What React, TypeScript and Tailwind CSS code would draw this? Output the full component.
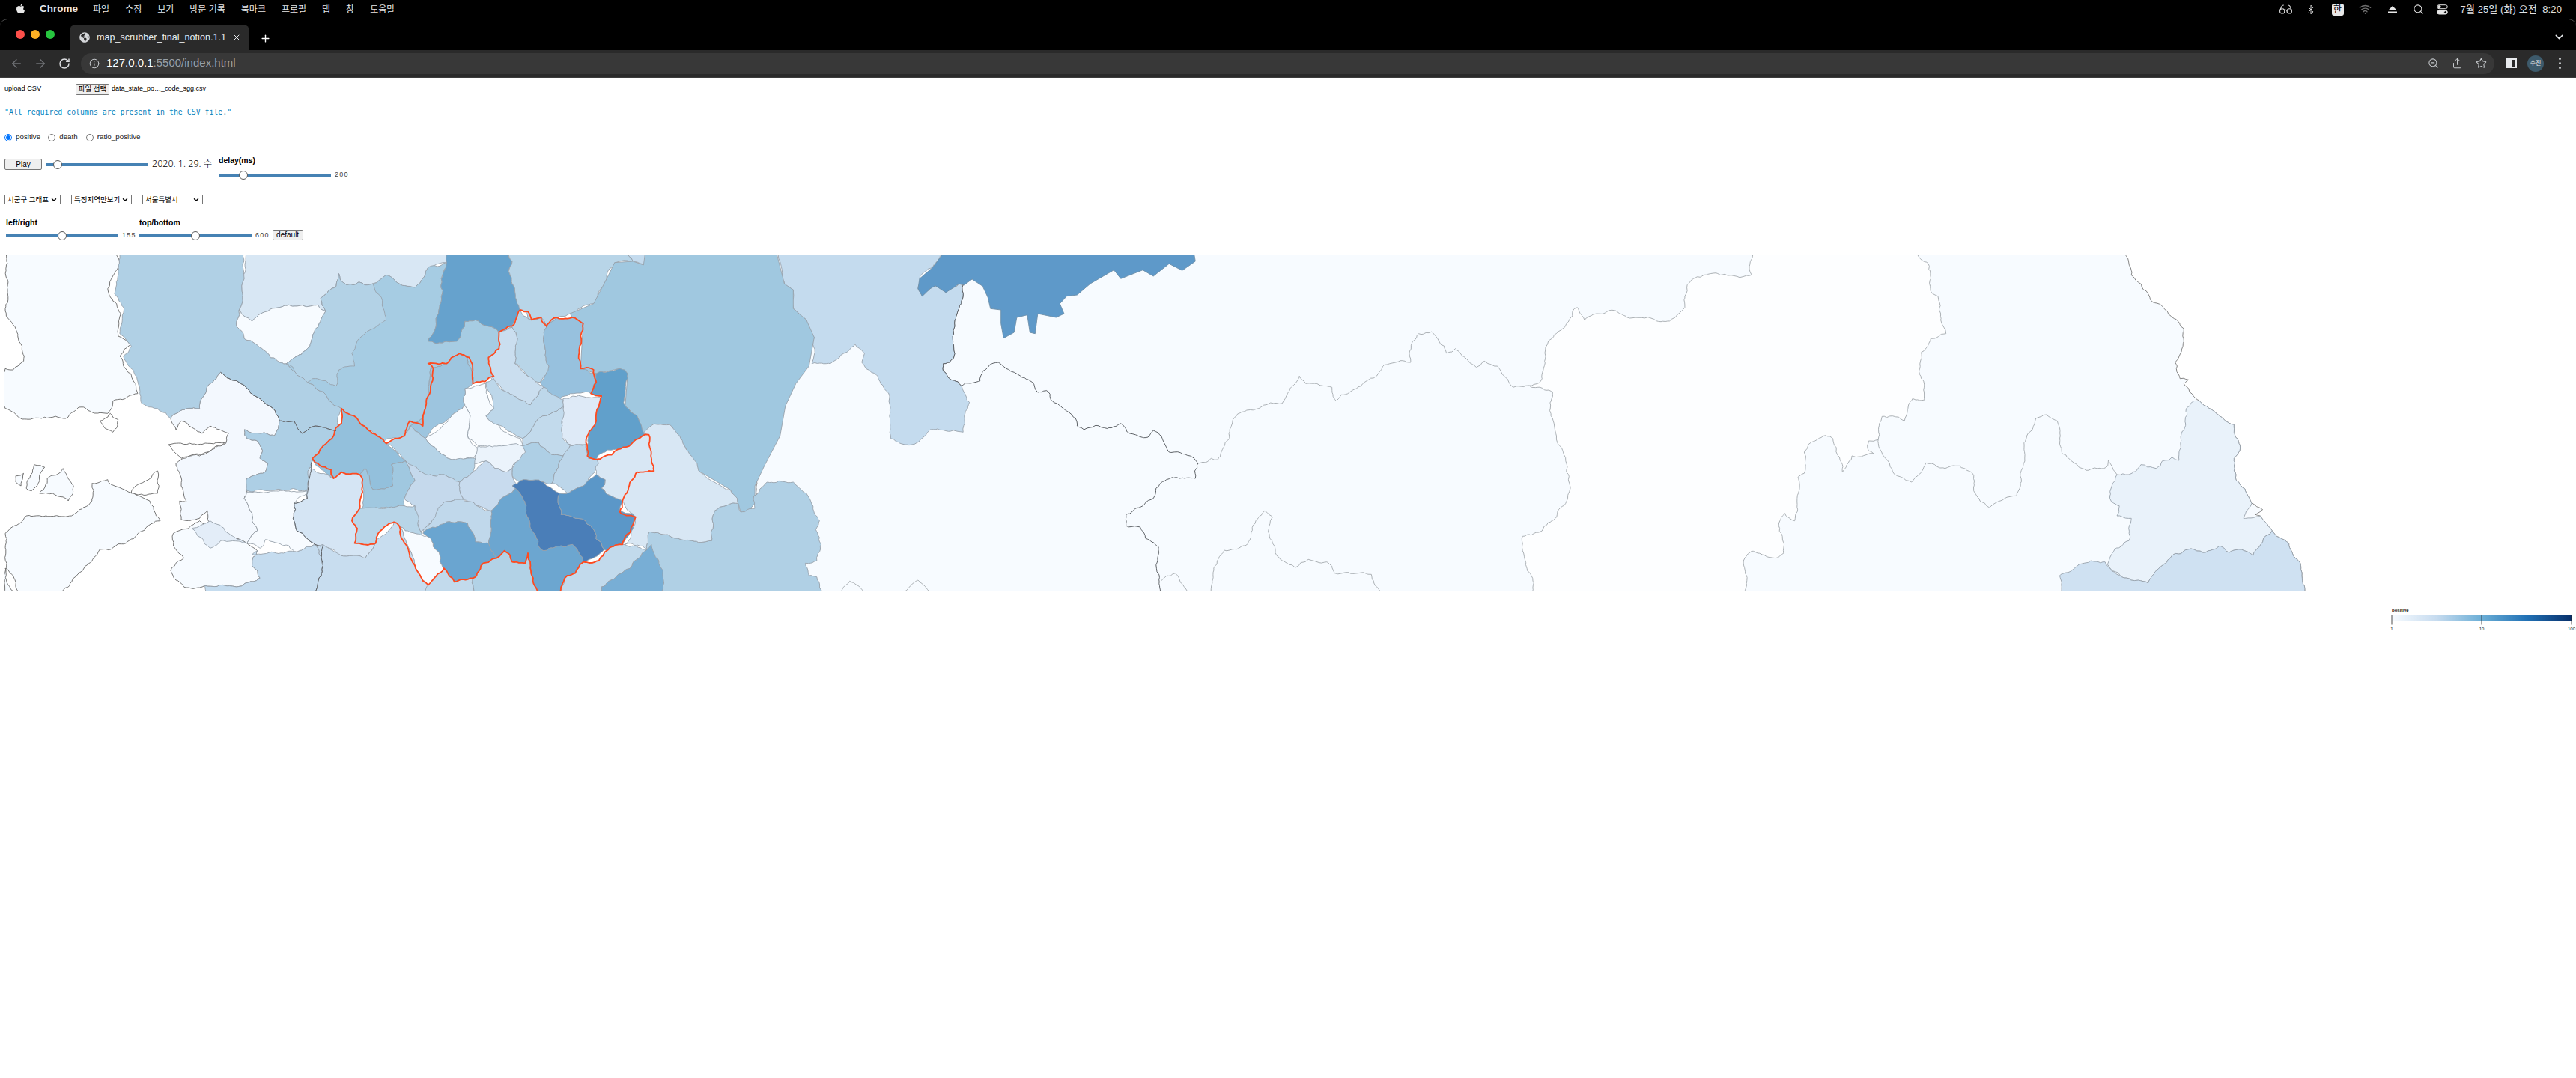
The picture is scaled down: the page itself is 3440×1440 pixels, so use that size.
import React from "react";
import { FaApple, FaGlobeAmericas } from "react-icons/fa";
import { ArrowLeft, ArrowRight, RotateCw, Info, X, Plus, ChevronDown, Search, Glasses, Bluetooth, Wifi, ZoomOut, Share, Star } from "lucide-react";

type Zone = "a" | "b" | "c";
type Pt = [number, number];
const ZS: Record<Zone, [number, number]> = { a: [1 / 1.4255, 0], b: [1 / 1.4255, 1000], c: [1 / 1.568, 2100] };

function parse(z: Zone, s: string): Pt[] {
  return s.trim().split(/\s+/).map((t) => {
    const [x, yy] = t.split(",").map(Number);
    const y = yy <= 33 ? 0 : yy >= 1383 ? 1420 : yy;
    return [x * ZS[z][0] + ZS[z][1], 330 + y / 3] as Pt;
  });
}
function noise(x: number, y: number, k: number) {
  const v = Math.sin(Math.round(x * 10) * 12.9898 + Math.round(y * 10) * 78.233 + k) * 43758.5453;
  return (v - Math.floor(v)) * 2 - 1;
}
function sub(a: Pt, b: Pt, out: Pt[]) {
  const l = Math.hypot(a[0] - b[0], a[1] - b[1]);
  if (l < 5) return;
  const mx = (a[0] + b[0]) / 2, my = (a[1] + b[1]) / 2;
  const amp = Math.min(l * 0.13, 2.6);
  const m: Pt = [mx + noise(mx, my, 1) * amp, my + noise(mx, my, 2) * amp];
  sub(a, m, out);
  out.push(m);
  sub(m, b, out);
}
function path(pts: Pt[], closed: boolean, jag: boolean) {
  const out: Pt[] = [];
  const n = pts.length;
  for (let i = 0; i < (closed ? n : n - 1); i++) {
    const a = pts[i], b = pts[(i + 1) % n];
    out.push(a);
    if (jag) sub(a, b, out);
  }
  if (!closed) out.push(pts[n - 1]);
  return "M" + out.map((p) => p[0].toFixed(1) + " " + p[1].toFixed(1)).join("L") + (closed ? "Z" : "");
}

type R = { f: string; z: Zone; s: string; e?: [Zone, string][]; smooth?: boolean; st?: string };
const regions: R[] = [
  { f: "#f7fbff", z: "b", s: "0,33 1600,33", e: [["c", "710,33 1142,33 1165,70 1170,115 1205,190 1210,215 1260,290 1280,330 1278,400 1262,465 1272,530 1290,535 1280,550 1290,570 1312,618 1355,680 1385,715 1398,810 1385,850 1385,900 1400,960 1422,1030 1445,1055 1430,1075 1440,1080 1465,1140 1500,1190 1520,1260 1528,1340 1532,1383 0,1383 -1100,1383 -1600,1383 -1700,1383"]], st: "#777" },
  { f: "#fdfeff", z: "c", s: "375,33 710,33 745,70 750,180 765,200 782,350 750,370 730,425 725,500 735,540 737,615 712,610 703,640 695,700 670,680 648,682 640,775 620,780 620,820 630,830 585,840 565,905 545,770 530,758 500,785 485,825 485,910 472,925 465,1100 445,1070 432,1110 442,1230 425,1250 375,1222 358,1260 365,1340 358,1383", e: [["b", "1490,1383 1492,1330 1475,1230 1473,1162 1510,1140 1555,1030 1562,950 1555,860 1535,740 1527,680 1530,585 1485,558 1510,530 1522,380 1568,280"], ["c", "0,260 10,245 25,296 50,270 90,258 120,288 170,292 185,302 215,285 235,245 235,200 240,155 258,125 275,115 295,108 350,125 375,115 370,90"]], st: "#a3a8ad" },
  { f: "#e9f2fa", z: "c", s: "1312,618 1355,680 1385,715 1398,810 1385,850 1385,900 1400,960 1422,1030 1405,1090 1440,1080 1465,1140 1445,1185 1425,1240 1395,1215 1375,1228 1355,1200 1320,1228 1295,1212 1255,1240 1205,1350 1150,1325 1120,1275 1135,1215 1165,1180 1170,1090 1140,1080 1145,1040 1125,1010 1140,915 1165,915 1190,875 1222,890 1235,860 1255,845 1270,858 1275,750 1285,650" },
  { f: "#cfe1f2", z: "c", s: "1465,1140 1500,1190 1520,1260 1528,1340 1532,1383 1020,1383 1020,1320 1060,1275 1085,1260 1115,1265 1150,1325 1205,1350 1255,1240 1295,1212 1320,1228 1355,1200 1375,1228 1395,1215 1425,1240 1445,1185" },
  { f: "#f7fbff", z: "a", s: "222,33 228,60 220,100 205,170 222,230 230,270 225,360 248,395 228,440 235,480 258,550 262,590 245,600 215,620 205,670 175,665 150,645 125,690 85,685 35,685 10,650 10,490 25,495 45,460 42,400 30,330 12,280 10,250 10,33", st: "#666" },
  { f: "#f7fbff", z: "a", s: "10,1150 50,1080 140,1075 175,1020 175,950 205,935 245,985 285,1020 305,1100 240,1190 190,1215 160,1290 100,1383 10,1383", st: "#666" },
  { f: "#f7fbff", z: "a", s: "65,875 85,885 60,980 50,970", st: "#666" },
  { f: "#f7fbff", z: "a", s: "120,890 140,960 130,1020 100,990 75,990 90,930", st: "#666" },
  { f: "#f7fbff", z: "a", s: "30,920 45,910 40,960 30,945", st: "#666" },
  { f: "#ffffff", z: "a", s: "190,700 210,670 225,695 215,745 200,730", st: "#666" },
  { f: "#ffffff", z: "a", s: "258,960 300,900 300,990 250,990", st: "#666" },
  { f: "#ffffff", z: "a", s: "10,1290 25,1320 45,1383 15,1355", st: "#666" },
  { f: "#f3f8fe", z: "a", s: "325,690 355,650 380,650 395,560 420,505 455,545 500,620 520,650 532,700 522,760 465,735 470,770 490,780 500,820 495,850 510,870 500,910 470,930 470,980 465,1010 480,1100 490,1140 470,1190 420,1145 395,1095 395,1060 380,1090 345,1095 342,1020 355,1025 345,960 335,870 345,855 380,840 430,790 435,750 400,720 385,750 345,700 335,735", st: "#666" },
  { f: "#ffffff", z: "a", s: "320,795 400,790 430,785 395,825 345,850 330,820", st: "#666" },
  { f: "#f7fbff", z: "a", s: "330,1150 380,1100 395,1120 420,1145 470,1190 490,1220 480,1280 495,1330 450,1365 390,1360 385,1365 350,1365 325,1300 350,1250 330,1200", st: "#666" },
  { f: "#e3edf8", z: "a", s: "365,1130 400,1100 470,1190 420,1180 400,1210" },
  { f: "#c5dcef", z: "a", s: "480,1235 565,1225 600,1195 615,1280 600,1383 390,1383 390,1360 450,1365 495,1330 480,1280 490,1220" },
  { f: "#c8ddef", z: "a", s: "600,1195 620,1200 650,1240 695,1250 715,1190 750,1105 760,1120 790,1280 815,1358 800,1383 600,1383 615,1280" },
  { f: "#b0d0e5", z: "a", s: "232,33 225,100 218,190 236,250 228,350 250,400 235,440 262,540 270,630 300,650 325,690 355,650 380,650 395,560 420,505 455,545 500,620 520,650 532,700 560,700 575,750 600,720 640,740 650,650 600,565 545,470 465,370 450,320 455,255 465,130 460,33" },
  { f: "#d8e7f4", z: "a", s: "470,33 855,33 850,65 815,85 805,130 790,165 760,150 735,115 710,150 660,155 645,110 640,160 610,210 620,260 605,235 550,235 510,260 480,300 455,255 465,130" },
  { f: "#f7fbff", z: "a", s: "455,255 480,300 510,260 550,235 605,235 620,260 610,340 590,400 545,470 465,370 450,320" },
  { f: "#a6cce3", z: "a", s: "610,210 640,160 645,110 660,155 710,150 735,115 760,150 790,165 805,130 815,85 855,65 840,130 840,220 830,320 815,380 830,390 870,380 885,300 905,295 950,345 950,410 930,445 940,520 900,550 890,440 875,430 850,470 820,490 815,600 805,690 780,720 770,760 730,785 650,650 600,565 545,470 590,400 620,260" },
  { f: "#b3d2e6", z: "a", s: "610,210 640,160 645,110 660,155 710,150 730,250 735,295 700,340 680,380 670,430 675,480 645,495 640,560 595,530 585,545 545,470 590,400 620,260" },
  { f: "#66a2cd", z: "a", s: "855,33 968,33 975,60 968,100 980,180 990,250 975,320 950,345 905,295 885,300 870,380 830,390 815,380 830,320 840,220 840,130 850,65" },
  { f: "#b8d5e8", z: "a", s: "968,33 1190,33 1205,60 1170,65 1155,130 1130,230 1085,270 1060,285 1040,315 1030,285 1005,290 1000,260 990,255 980,180 968,100 975,60" },
  { f: "#c4dbee", z: "b", s: "50,33 380,33 350,85 325,130 322,170 330,200 345,170 355,158 375,185 390,165 400,150 408,155 408,200 400,250 392,320 390,405 392,430 382,465 370,470 370,500 385,535 405,560 420,625 410,680 408,745 345,735 310,795 270,770 268,600 245,520 215,465 220,430 202,392 180,430 155,470 120,470 125,365 110,295 85,250 85,175 68,150" },
  { f: "#c4dbee", z: "a", s: "1190,33 1232,33 1225,75 1205,60" },
  { f: "#a0c8e0", z: "a", smooth: true, s: "1230,33 1475,33 1493,150 1510,175 1510,250 1535,295 1550,365 1540,480 1515,550 1495,640 1485,760 1455,880 1437,960 1437,1030 1425,1060 1410,1065 1405,1030 1390,975 1330,900 1300,790 1275,715 1245,712 1225,750 1215,690 1190,640 1195,510 1180,490 1135,510 1105,490 1110,310 1090,285 1085,270 1130,230 1155,130 1170,65 1205,60 1225,75" },
  { f: "#5e99c9", z: "b", smooth: true, st: "#6d8fa8", s: "380,33 845,33 850,60 825,97 800,70 770,120 750,95 708,130 695,95 650,150 625,195 605,200 592,230 600,270 585,285 550,270 545,350 535,345 530,275 510,285 505,345 485,368 480,310 480,255 460,250 455,205 445,160 425,132 410,155 400,150 390,165 375,185 355,158 345,170 330,200 322,170 325,130 350,85" },
  { f: "#b0d0e5", z: "a", s: "1232,1215 1235,1145 1290,1170 1340,1185 1355,1180 1360,1060 1405,1030 1410,1065 1437,1050 1435,1000 1460,945 1510,945 1535,990 1560,1100 1553,1135 1563,1195 1555,1260 1533,1270 1540,1320 1555,1325 1565,1383 1245,1383" },
  { f: "#d8e7f4", z: "a", s: "1245,712 1275,715 1300,790 1330,900 1390,975 1405,1030 1360,1060 1355,1180 1340,1185 1290,1170 1235,1145 1232,1215 1190,1195 1210,1085 1185,1020 1145,970 1152,935 1135,915 1135,855 1190,805 1225,750" },
  { f: "#adcfe5", z: "a", s: "532,700 560,700 575,750 600,720 640,740 635,760 615,800 595,850 590,920 585,980 470,980 470,930 500,910 510,870 495,850 500,820 490,780 470,770 465,735 522,760" },
  { f: "#f7fbff", z: "a", s: "470,985 585,982 560,1030 558,1090 565,1140 600,1195 565,1225 530,1190 505,1175 495,1210 470,1190 490,1140 480,1100 465,1010" },
  { f: "#d5e5f4", z: "a", s: "590,885 635,930 650,905 685,915 690,960 685,1050 670,1100 680,1130 675,1190 715,1190 695,1250 650,1240 615,1195 600,1195 565,1140 558,1090 560,1030 585,1010" },
  { f: "#b8d5e8", z: "a", s: "950,345 975,320 990,255 1005,290 1030,285 1040,315 1037,400 1045,480 1045,500 1028,545 980,470 985,370 975,325" },
  { f: "#97c1de", z: "a", s: "1040,315 1060,285 1090,285 1110,310 1105,490 1135,510 1125,590 1075,600 1055,615 1028,545 1045,480 1037,400" },
  { f: "#cadeef", z: "a", s: "950,410 950,345 975,325 985,370 980,470 1035,565 1010,635 960,580 935,530 940,520 930,445" },
  { f: "#61a0cb", z: "a", s: "1135,510 1180,490 1195,510 1190,640 1215,690 1225,750 1235,755 1190,805 1145,830 1135,855 1118,840 1120,760 1135,700 1145,600 1125,590" },
  { f: "#deeaf7", z: "a", s: "1072,610 1145,600 1135,700 1118,760 1115,795 1098,800 1070,770" },
  { f: "#9dc5df", z: "a", s: "820,490 850,470 875,430 890,440 900,550 885,570 885,640 855,690 830,720 810,770 780,720 805,690 815,600" },
  { f: "#f7fbff", z: "a", s: "885,570 925,550 940,650 925,680 940,710 990,770 995,800 940,805 915,800 890,760 895,680 885,640" },
  { f: "#f7fbff", z: "a", s: "885,640 895,680 890,760 912,825 900,850 860,855 810,770 830,745 855,690" },
  { f: "#bdd7ea", z: "a", s: "925,545 940,530 960,580 1010,635 1035,565 1072,615 1072,640 1025,690 995,770 940,710 925,680 940,650" },
  { f: "#c2daec", z: "a", s: "1072,640 1070,770 1085,800 1072,840 1050,835 1025,785 995,800 995,770 1025,690" },
  { f: "#aecfe5", z: "a", s: "995,800 1025,785 1050,835 1072,840 1050,950 1035,945 985,940 975,920 975,890" },
  { f: "#bcd6ea", z: "a", s: "1085,800 1115,795 1120,850 1135,855 1140,870 1130,910 1110,960 1080,990 1050,950 1072,840" },
  { f: "#ebf3fb", z: "a", s: "910,800 995,800 1000,825 975,890 965,905 925,860 900,870 905,850" },
  { f: "#b5d3e7", z: "a", s: "735,790 770,760 780,720 810,770 860,855 905,850 900,905 875,945 845,915 810,915 770,855" },
  { f: "#93c0dc", z: "a", s: "595,850 615,800 635,760 650,710 650,650 735,790 772,860 745,875 748,960 710,975 695,890 685,915 650,905 635,930" },
  { f: "#a0c8e0", z: "a", s: "685,915 695,890 710,975 748,960 745,875 772,860 790,940 770,1010 770,1040 745,1050 710,1050 690,1050 690,960" },
  { f: "#c5d9ec", z: "a", s: "772,860 810,915 845,915 875,945 882,1015 845,1025 830,1095 815,1115 800,1145 790,1040 770,1010 790,940" },
  { f: "#c8dbee", z: "a", s: "875,945 900,905 925,860 965,905 975,890 975,920 985,960 945,1040 935,1060 905,1040 882,1015" },
  { f: "#c0d8eb", z: "a", s: "845,1025 882,1015 935,1060 930,1190 905,1185 890,1110 850,1105 815,1145 805,1140" },
  { f: "#b8d5e8", z: "a", s: "690,1050 770,1040 790,1040 800,1140 805,1170 760,1120 750,1105 720,1150 715,1190 675,1190 680,1130 670,1100 685,1050" },
  { f: "#6aa5d0", z: "a", s: "805,1150 850,1105 890,1110 905,1185 930,1190 945,1250 920,1270 900,1330 865,1345 845,1290 820,1170" },
  { f: "#6ca6d0", z: "a", s: "985,960 990,990 1010,1130 1035,1220 1090,1195 1110,1265 1095,1310 1075,1330 1060,1383 1030,1383 1015,1330 1005,1230 1000,1270 975,1265 960,1220 945,1250 930,1190 935,1060 945,1040" },
  { f: "#4a7eb8", z: "a", s: "975,960 990,940 1035,945 1065,990 1068,1075 1125,1120 1150,1215 1110,1265 1090,1195 1035,1220 1010,1130 990,990" },
  { f: "#5b97c8", z: "a", s: "1065,990 1080,990 1110,960 1135,915 1152,935 1145,970 1185,1020 1180,1060 1210,1085 1205,1130 1185,1195 1155,1220 1150,1215 1125,1120 1068,1075" },
  { f: "#f7fbff", z: "a", s: "760,1120 820,1170 845,1290 815,1358 790,1280" },
  { f: "#c2daec", z: "a", s: "845,1290 865,1345 900,1330 905,1383 795,1383 815,1358" },
  { f: "#b2d2e6", z: "a", s: "905,1383 900,1330 920,1270 945,1250 960,1220 975,1265 1000,1270 1005,1230 1015,1330 1030,1383" },
  { f: "#c2daec", z: "a", s: "1065,1383 1075,1330 1095,1310 1110,1265 1140,1260 1155,1220 1185,1195 1232,1215 1200,1290 1145,1365 1145,1383" },
  { f: "#78aed5", z: "a", s: "1145,1383 1145,1365 1200,1290 1232,1215 1240,1195 1262,1300 1262,1383" },
];

const grayLines: [Zone, string][] = [
  ["b", "855,870 880,850 893,855 915,770 925,685 985,635 1015,630 1030,570 1048,520 1060,550 1110,565 1118,620 1165,560 1195,520 1210,475 1260,465 1258,420 1275,350 1300,342 1328,428 1345,410 1385,485 1400,460 1425,480 1455,565 1485,558"],
  ["b", "785,1340 812,1310 845,1383"],
  ["b", "882,1383 885,1290 905,1218 945,1200 965,1100 982,1060 997,1085 990,1130 1005,1240 1040,1288 1065,1255 1100,1265 1115,1310 1160,1310 1185,1315 1190,1350 1220,1383"],
  ["b", "168,1383 192,1342 240,1383"],
  ["b", "285,1383 322,1338 358,1383"],
  ["c", "640,775 655,850 680,920 710,945 740,868 780,890 810,880 835,905 840,980 873,1047 905,1010 930,1000 938,960 950,770 970,690 992,675 1015,700 1025,830 1075,898 1118,885 1122,855 1140,915"],
];
const darkLines: [Zone, string][] = [
  ["b", "408,155 408,200 400,250 392,320 390,405 392,430 382,465 370,470 370,500 385,535 405,560 412,548 440,540 445,500 475,465 490,490 505,505 520,525 540,545 550,585 567,578 575,615 605,660 622,690 625,720 638,735 660,718 690,728 708,710 725,750 760,765 770,738 785,760 800,825 840,840 855,870 850,930 795,935 775,970 770,1010 750,1040 718,1075 718,1120 745,1125 755,1170 780,1205 778,1250 785,1383"],
  ["a", "420,505 455,545 500,620 520,650 532,700 560,700 575,750 600,720 640,740"],
  ["a", "595,850 590,920 585,1010 560,1030 558,1090 565,1140 600,1195 615,1200 615,1280 600,1383"],
];
const seoul = "650,650 735,790 770,760 780,700 805,720 805,690 815,600 825,490 815,470 850,470 875,430 893,445 900,550 940,520 930,445 950,410 950,345 975,320 990,255 1005,262 1012,295 1030,285 1040,320 1060,285 1090,285 1110,310 1105,490 1130,495 1135,545 1125,590 1145,600 1135,700 1118,760 1118,840 1135,855 1190,805 1235,755 1245,900 1212,905 1185,1020 1180,1065 1210,1085 1200,1145 1185,1195 1155,1220 1140,1260 1110,1265 1095,1310 1075,1330 1060,1383 1030,1383 1015,1330 1005,1230 1000,1270 975,1265 960,1220 945,1250 920,1270 900,1330 865,1345 845,1290 815,1358 805,1340 790,1280 780,1245 760,1120 750,1105 720,1150 715,1190 675,1190 680,1130 670,1100 685,1050 690,960 685,915 650,905 635,930 630,895 595,850 615,800 635,760 650,710";

function MapChart() {
  return (
    <svg width={3090} height={450} viewBox="6 341 3090 450" className="block">
      {regions.map((r, i) => {
        let pts = parse(r.z, r.s);
        (r.e ?? []).forEach((x) => { pts = pts.concat(parse(x[0], x[1])); });
        return (
          <path key={i} d={path(pts, true, !r.smooth)} fill={r.f} stroke={r.st ?? "#97a2ac"} strokeWidth={0.9} strokeLinejoin="round" />
        );
      })}
      {grayLines.map((l, i) => (
        <path key={i} d={path(parse(l[0], l[1]), false, true)} fill="none" stroke="#a3a8ad" strokeWidth={0.9} />
      ))}
      {darkLines.map((l, i) => (
        <path key={i} d={path(parse(l[0], l[1]), false, true)} fill="none" stroke="#5f6368" strokeWidth={1} />
      ))}
      <path d={path(parse("a", seoul), true, true)} fill="none" stroke="#ff4a1f" strokeWidth={1.8} strokeLinejoin="round" />
    </svg>
  );
}

function Slider({ w, pos }: { w: number; pos: number }) {
  return (
    <div className="relative h-[4px] bg-[#4682b4]" style={{ width: w }}>
      <div className="absolute top-[-4px] h-[12px] w-[12px] rounded-full border border-[#5a5a5a] bg-white" style={{ left: pos - 6 }} />
    </div>
  );
}
function Radio({ on }: { on?: boolean }) {
  return on ? (
    <span className="flex h-[10px] w-[10px] items-center justify-center rounded-full border border-[#0075ff] bg-white">
      <span className="block h-[6px] w-[6px] rounded-full bg-[#0075ff]" />
    </span>
  ) : (
    <span className="block h-[10px] w-[10px] rounded-full border border-[#767676] bg-white" />
  );
}
function Sel({ w, label }: { w: number; label: string }) {
  return (
    <div className="flex h-[13px] items-center justify-between border border-[#767676] bg-white pl-[3px] pr-[3px] text-[9.5px] leading-none text-black" style={{ width: w }}>
      <span className="whitespace-nowrap">{label}</span>
      <ChevronDown size={10} strokeWidth={3.5} color="#000" />
    </div>
  );
}
const Btn = ({ cls, children }: { cls: string; children: React.ReactNode }) => (
  <button className={"flex items-center justify-center rounded-[2px] border border-[#767676] bg-[#efefef] leading-none text-black " + cls}>{children}</button>
);

const menu = ["파일", "수정", "보기", "방문 기록", "북마크", "프로필", "탭", "창", "도움말"];

export default function App() {
  return (
    <div className="min-h-[1440px] w-[3440px] overflow-hidden bg-white font-['Liberation_Sans','Noto_Sans_CJK_KR',sans-serif]">
      {/* menu bar */}
      <div className="flex h-[25px] items-center bg-black pl-[20px] pr-[19px] text-[#e6e6e6]">
        <FaApple size={15} color="#e8e8e8" className="mb-[2px] mr-[18px]" />
        <span className="mr-[20px] text-[13.5px] font-bold">Chrome</span>
        <div className="flex gap-[21px] text-[12px]">
          {menu.map((m) => <span key={m} className="whitespace-nowrap">{m}</span>)}
        </div>
        <div className="ml-auto flex items-center text-[#e0e0e0]">
          <Glasses size={19} strokeWidth={1.4} className="mr-[17px]" />
          <Bluetooth size={14} strokeWidth={1.6} className="mr-[21px]" />
          <span className="mr-[20px] flex h-[16px] w-[16px] items-center justify-center rounded-[3px] bg-[#e8e8e8] text-[12px] leading-none text-black">한</span>
          <Wifi size={17} strokeWidth={2} color="#6e6e6e" className="mr-[22px]" />
          <svg width="12" height="10" viewBox="0 0 12 10" className="mr-[21px]"><path d="M6 0L12 6H0Z M0 7.5H12V10H0Z" fill="#e6e6e6" /></svg>
          <Search size={15} strokeWidth={1.8} className="mr-[17px]" />
          <svg width="15" height="14" viewBox="0 0 15 14" className="mr-[17px]" fill="none" stroke="#e6e6e6"><rect x="0.7" y="0.7" width="13.6" height="5" rx="2.5" /><circle cx="3.5" cy="3.2" r="1.7" fill="#e6e6e6" /><rect x="0.7" y="8" width="13.6" height="5" rx="2.5" fill="#e6e6e6" /><circle cx="11.5" cy="10.5" r="1.8" fill="#000" /></svg>
          <span className="whitespace-nowrap text-[13px] tracking-[0.1px]">7월 25일 (화) 오전&nbsp;&nbsp;8:20</span>
        </div>
      </div>
      {/* tab strip */}
      <div className="bg-black">
        <div className="flex h-[42px] items-end rounded-t-[10px] border-t border-[#5a5a5a] bg-black pl-[21px]">
          <div className="mb-[15px] mr-[20px] flex gap-[8px]">
            <span className="h-[12px] w-[12px] rounded-full bg-[#fc4f4a]" />
            <span className="h-[12px] w-[12px] rounded-full bg-[#fdb024]" />
            <span className="h-[12px] w-[12px] rounded-full bg-[#27c53f]" />
          </div>
          <div className="flex h-[34px] w-[240px] items-center rounded-t-[8px] bg-[#2a2a2a] pl-[13px] text-[#e8eaed]">
            <FaGlobeAmericas size={14} color="#d5d7da" />
            <span className="ml-[9px] whitespace-nowrap text-[12.6px]">map_scrubber_final_notion.1.1</span>
            <X size={12} strokeWidth={2} className="ml-[8px]" />
          </div>
          <Plus size={15} strokeWidth={2.2} color="#fff" className="mb-[8px] ml-[14px]" />
          <ChevronDown size={17} strokeWidth={2} color="#e8eaed" className="mb-[9px] ml-auto mr-[14px]" />
        </div>
        {/* toolbar */}
        <div className="flex h-[37px] items-center border-b border-[#3c3c3c] bg-[#2a2a2a] pb-[1px] pl-[13px] pr-[14px]">
          <ArrowLeft size={18} strokeWidth={1.8} color="#6f7175" />
          <ArrowRight size={18} strokeWidth={1.8} color="#6f7175" className="ml-[14px]" />
          <RotateCw size={16} strokeWidth={2.2} color="#dcdde0" className="ml-[15px]" />
          <div className="ml-[14px] flex h-[28px] w-[3223px] items-center rounded-full bg-[#383838] pl-[11px] pr-[8px] text-[15px]">
            <Info size={14} strokeWidth={1.7} color="#c4c7ca" />
            <span className="ml-[9px] whitespace-nowrap text-white">127.0.0.1<span className="text-[#9aa0a6]">:5500/index.html</span></span>
            <ZoomOut size={15} strokeWidth={1.7} color="#c4c7ca" className="ml-auto mr-[17px]" />
            <Share size={15} strokeWidth={1.6} color="#c4c7ca" className="mr-[17px]" />
            <Star size={15} strokeWidth={1.7} color="#c4c7ca" className="mr-[2px]" />
          </div>
          <div className="ml-[16px] flex h-[13px] w-[14px] justify-end bg-[#e8eaed]"><span className="mr-[2px] mt-[2px] h-[9px] w-[5px] bg-[#2a2a2a]" /></div>
          <span className="ml-[14px] flex h-[22px] w-[22px] items-center justify-center rounded-full bg-[#3d5a6b] text-[8px] text-[#e8eaed]">수진</span>
          <div className="ml-[20px] flex flex-col gap-[3px]">
            <span className="h-[3px] w-[3px] rounded-full bg-[#c9cbce]" /><span className="h-[3px] w-[3px] rounded-full bg-[#c9cbce]" /><span className="h-[3px] w-[3px] rounded-full bg-[#c9cbce]" />
          </div>
        </div>
      </div>
      {/* page */}
      <div className="pl-[6px]">
        <div className="flex h-[30px] items-center text-[9.2px] text-black">
          <span className="w-[95px]">upload CSV</span>
          <Btn cls="h-[15px] w-[45px] text-[9.5px]">파일 선택</Btn>
          <span className="ml-[3px] whitespace-nowrap text-[9px]">data_state_po…_code_sgg.csv</span>
        </div>
        <div className="flex h-[32px] items-center font-['DejaVu_Sans_Mono',monospace] text-[9.9px] text-[#0a83bd]">"All required columns are present in the CSV file."</div>
        <div className="flex h-[36px] items-center text-[9.8px] text-[#222]">
          <Radio on /><span className="mb-[2px] ml-[5px]">positive</span>
          <span className="ml-[10px]"><Radio /></span><span className="mb-[2px] ml-[5px]">death</span>
          <span className="ml-[11px]"><Radio /></span><span className="mb-[2px] ml-[5px]">ratio_positive</span>
        </div>
        <div className="flex h-[58px]">
          <div className="mt-[10px] flex h-[15px] items-center">
            <Btn cls="h-[15px] w-[50px] text-[10px]">Play</Btn>
            <div className="ml-[6px]"><Slider w={135} pos={15} /></div>
            <span className="ml-[6px] w-[89px] whitespace-nowrap font-['Noto_Sans','Noto_Sans_CJK_KR',sans-serif] text-[12.5px] font-light">2020. 1. 29. 수</span>
          </div>
          <div>
            <div className="mt-[6px] h-[12px] text-[10.5px] font-bold leading-[12px]">delay(ms)</div>
            <div className="mt-[8px] flex h-[12px] items-center">
              <Slider w={150} pos={33} />
              <span className="ml-[5px] text-[9px] tracking-[1.2px] text-[#444]">200</span>
            </div>
          </div>
        </div>
        <div className="flex gap-[14px]">
          <Sel w={75} label="시군구 그래프" />
          <Sel w={81} label="특정지역만보기" />
          <Sel w={81} label="서울특별시" />
        </div>
        <div className="mt-[18px] flex pl-[2px]">
          <div className="w-[178px]">
            <div className="h-[12px] text-[10.5px] font-bold leading-[12px]">left/right</div>
            <div className="mt-[5px] flex h-[14px] items-center">
              <Slider w={150} pos={75} />
              <span className="ml-[5px] text-[9px] tracking-[1.2px] text-[#444]">155</span>
            </div>
          </div>
          <div>
            <div className="h-[12px] text-[10.5px] font-bold leading-[12px]">top/bottom</div>
            <div className="mt-[4px] flex h-[14px] items-center">
              <div className="mt-[2px] flex items-center">
                <Slider w={150} pos={75} />
                <span className="ml-[5px] text-[9px] tracking-[1.2px] text-[#444]">600</span>
              </div>
              <Btn cls="ml-[4px] h-[14px] w-[41px] text-[10px]">default</Btn>
            </div>
          </div>
        </div>
        <div className="mt-[18px]"><MapChart /></div>
      </div>
      <div className="mt-[19px] flex justify-end">
        <svg width={250} height={40} viewBox="3190 810 250 40" className="block">
          <defs>
            <linearGradient id="blues" x1="0" x2="1" y1="0" y2="0">
              <stop offset="0" stopColor="#f7fbff" /><stop offset="0.25" stopColor="#c6dbef" /><stop offset="0.5" stopColor="#6baed6" /><stop offset="0.75" stopColor="#2171b5" /><stop offset="1" stopColor="#08306b" />
            </linearGradient>
          </defs>
          <text x={3194} y={818} fontSize={6} fontWeight={700} fill="#111">positive</text>
          <rect x={3194} y={823} width={240} height={8} fill="url(#blues)" />
          {[3194, 3314, 3434].map((x) => <line key={x} x1={x} x2={x} y1={823} y2={835.5} stroke="#222" strokeWidth={0.8} />)}
          <text x={3194} y={843} fontSize={6} textAnchor="middle" fill="#222">1</text>
          <text x={3314} y={843} fontSize={6} textAnchor="middle" fill="#222">10</text>
          <text x={3434} y={843} fontSize={6} textAnchor="middle" fill="#222">100</text>
        </svg>
      </div>
    </div>
  );
}
